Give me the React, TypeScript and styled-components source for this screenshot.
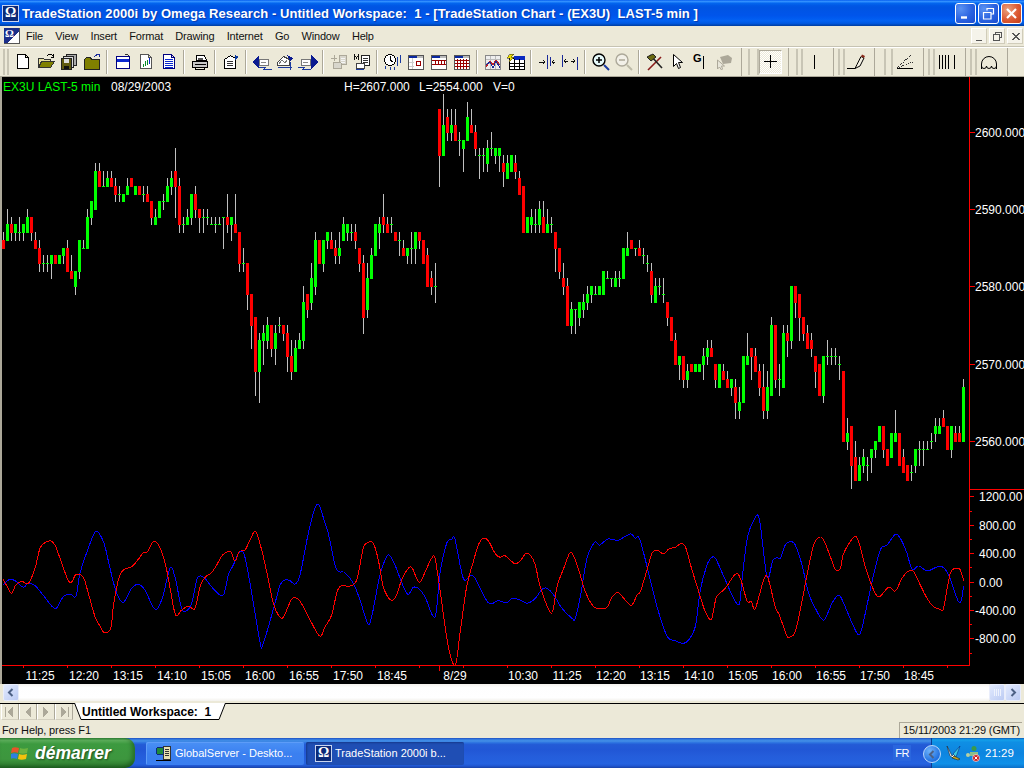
import React from "react";
import styled, { createGlobalStyle } from "styled-components";

const GlobalStyle = createGlobalStyle`
  html, body { margin: 0; padding: 0; width: 1024px; height: 768px; overflow: hidden; background: #ece9d8; }
  * { box-sizing: border-box; }
`;

const UI_FONT = `"Liberation Sans", Arial, sans-serif`;

/* ---------- chart data, read off the screen in 3x crop coordinates ---------- */

const candlesA = `r,450,477,426,477 g,402,453,357,453 r,402,429,381,453 g,402,429,402,453 d,427,427,381,453 g,402,429,402,453 g,381,429,357,429 r,381,429,381,453
r,450,477,426,477 r,474,522,450,546 d,520,520,495,546 d,520,520,495,546 g,495,522,495,567 r,495,522 g,495,522 g,474,498,474,522 r,474,546,450,546 r,543,567,495,567 g,543,591,543,615
g,450,546,450,567 d,475,475,450,477 g,381,477,357,477 g,333,384,333,405 g,243,360,219,360 r,243,291,219,291 d,289,289,243,291 g,264,291,243,291 r,264,291,243,291 r,288,315,264,336
d,313,313,288,336 g,312,336 g,288,315,264,315 r,264,291 g,288,315 r,288,315 d,313,313,288,336 r,312,336,288,336 r,333,384,333,405 g,381,405,357,405 g,333,384 d,334,334,312,360
g,288,336,264,336 g,264,291,243,315 r,243,291,174,384 r,288,405,264,429 d,403,403,381,429 g,381,405,357,405 g,312,384,312,405 r,312,360,288,384 r,357,384,357,429 d,382,382,357,429
d,382,382,357,405 d,403,403,381,405 d,403,403,381,429 d,403,403,381,405 d,382,382,381,477 r,381,405,312,429 g,381,405,381,453 r,402,429,312,429 r,426,522,426,546 d,520,520,474,546
r,519,615,519,660 r,612,708,612,777 r,681,846,681,918 g,750,846,729,939 g,729,753,705,825 g,705,753,681,777 r,705,777,705,801 g,729,777,705,825 d,706,706,681,729 r,705,732,705,753
r,729,801,705,846 r,798,846,750,870 g,774,846,750,846 g,750,777,729,777 g,636,753,588,777 r,612,660,612,684 g,564,639,519,660 g,450,591,426,615 r,450,522 g,450,522,450,546
g,426,453,426,477 r,450,477,426,477 r,474,498,450,522 g,474,498,426,522
g,402,453,381,453 g,402,429,402,453 d,427,427,402,453 r,426,453,402,477 r,474,522,474,546 r,519,684,495,732 g,564,660,519,684 g,495,567,474,567 g,402,498 g,402,429,381,477
r,381,405,312,429 r,402,429,381,429 d,403,403,381,429 r,426,453 d,451,451,426,498 r,474,498,450,498 g,474,498,474,522 d,475,475,426,522 g,426,477,426,522 r,426,453,426,477
r,450,522 r,495,591,474,591 r,564,591,543,615 d,589,589,519,639 r,57,198,57,291 g,105,198,12,198 r,81,129,57,153 g,105,129,57,153 r,105,153,57,153 d,151,151,126,198 g,150,177,150,246
g,81,153,36,153 r,105,129,57,129 r,126,177,105,198 d,196,196,174,267 d,196,196,174,246 g,174,222,150,246 d,175,175,126,198 g,174,198,174,222 g,174,198,174,246 r,219,246,195,291
g,219,267,195,267 g,195,246 r,219,246,195,267 r,264,315,243,315 r,288,429 g,381,429 g,381,405,357,429 d,403,403,357,429 g,357,405,333,429 r,381,429,333,429 g,402,429,357,429
d,403,403,381,429 r,426,477,426,546 r,474,546,474,567 r,564,591,519,615 r,588,708,564,708 g,657,708,636,732 d,658,658,658,732 g,636,684,636,708 g,636,660,612,684 g,612,639,588,660
g,588,615,588,639 d,613,613,588,615 g,588,615 g,543,615 d,565,565,543,567 d,565,565,565,591 g,565,591,543,591 d,565,565,543,591 g,474,567 g,474,498,426,498 r,450,477
d,475,475,474,498 r,474,498,450,498 d,496,496,474,522 d,520,520,495,546 r,543,615,519,639 g,588,639,564,639 d,589,589,564,615 d,613,613,564,639 r,636,684,636,708 r,681,753
r,750,825,729,825 g,798,825,798,870`;

const candlesB = `r,288,360,288,384 g,333,360,312,384 r,312,336 g,312,336 g,312,336 g,288,315,264,360 g,264,291,240,315 r,264,291,240,291 r,312,360,312,384 g,312,384 r,333,360,312,360
r,357,384,333,384 g,357,384,357,408 r,381,429,357,477 g,426,453,381,477 g,288,429 g,288,315,219,315 r,264,291,264,360 r,288,336,264,336 r,333,384,312,408 r,381,453,312,477
g,381,453,333,477 g,195,408,171,408 r,195,360,195,384 d,358,358,312,408 g,219,384,195,384 r,219,243,195,291 g,78,243,78,267 r,78,129,78,174 r,102,174,102,243 r,171,222,171,243
r,219,267,195,267 r,240,267,219,291 r,288,336,288,384 r,312,408 g,288,408,288,429 d,289,289,240,315 d,289,289,264,315 d,289,289,264,315 d,313,313,288,360 r,333,546
g,519,546,474,570 r,498,618,498,687 r,591,663,543,663 g,615,663,591,663 g,591,618,567,639 d,616,616,591,663 g,567,594,567,639 g,543,570,543,594 g,498,546 r,498,570,498,594
r,567,618 g,519,594 g,519,546,450,546 r,519,618 r,591,639,567,639 r,615,663 d,637,637,615,663 g,567,618,567,639 d,568,568,543,618 d,568,568,543,618 d,568,568,543,567 d,544,544,519,567
g,498,522,474,546 g,498,522,474,522 r,474,501,450,501 r,498,570 g,498,570,498,594 r,519,546,498,546 r,519,546,498,546 g,381,546,357,546`;

type Candle = { kind: string; top: number; bottom: number; wickTop: number; wickBottom: number };

const parseCandles = (text: string, origin: number): Candle[] =>
  text
    .trim()
    .split(/\s+/)
    .map((token) => {
      const [kind, a, b, c, d] = token.split(",");
      const py = (v: string) => Math.round(origin + Number(v) / 3);
      return {
        kind,
        top: py(a),
        bottom: py(b),
        wickTop: c ? py(c) : py(a),
        wickBottom: d ? py(d) : py(b),
      };
    });

const candles = [...parseCandles(candlesA, 90), ...parseCandles(candlesB, 260)];

const redA = "9,268 22,290 35,310 47,285 65,274 85,280 105,235 120,175 135,158 152,153 165,165 180,205 203,268 215,276 228,253 250,262 265,310 285,380 300,408 313,428 332,415 340,350 355,270 370,240 395,230 415,208 430,188 443,185 458,157 470,158 485,185 500,240 513,310 527,375 545,360 565,348 585,355 600,290 615,262 635,248 650,225 668,195 692,185 705,213 718,185 735,180 750,150 767,124 785,180 800,245 820,340 835,375 850,382 875,328 897,330 920,370 958,437 975,410 995,375 1010,310 1022,288 1050,288 1070,270 1090,175 1105,157 1120,160 1135,210 1150,290 1172,330 1188,318 1205,270 1225,235 1237,235 1258,277 1280,235 1295,205 1305,205 1320,300 1345,470 1366,524 1380,430 1400,290 1420,215 1435,165 1450,145 1465,152 1485,190 1500,202 1515,197 1536,215";
const redB = "10,222 25,212 42,190 55,195 70,225 85,290 118,370 135,290 155,235 177,187 200,240 220,305 245,350 265,355 285,352 300,322 318,307 335,325 358,346 375,315 385,305 405,240 420,190 435,180 455,192 470,177 490,172 505,162 520,170 540,240 565,320 580,365 598,388 612,325 625,308 640,295 670,253 685,265 705,332 718,335 730,355 755,270 768,265 790,350 802,375 825,438 835,440 850,425 868,345 885,255 905,165 922,142 935,150 955,200 970,238 985,235 995,190 1025,142 1040,155 1060,230 1085,300 1102,320 1130,292 1150,303 1170,265 1190,243 1205,245 1225,285 1245,325 1265,350 1285,358 1295,353 1315,250 1335,235 1345,240 1355,272";
const blueA = "9,285 30,268 50,275 70,292 85,280 105,287 125,310 155,348 170,354 190,320 210,312 228,318 240,250 265,175 288,124 312,160 330,235 350,310 370,337 395,295 415,283 435,300 465,358 487,325 500,270 513,230 527,270 545,355 560,362 575,340 590,270 600,258 615,265 645,302 670,315 685,255 700,225 718,187 733,195 750,280 780,455 790,460 825,340 840,285 855,270 870,272 885,282 900,255 925,130 945,55 958,47 975,100 985,130 1005,225 1018,245 1035,248 1060,280 1080,330 1103,400 1115,380 1140,255 1160,200 1170,197 1185,225 1220,310 1240,292 1255,295 1275,320 1305,380 1320,250 1340,160 1355,148 1365,148 1390,265 1410,257 1425,265 1465,338 1495,332 1520,338 1536,325";
const blueB = "25,330 45,340 70,325 90,298 105,295 125,315 150,355 180,385 190,385 205,320 225,205 248,157 263,165 285,148 300,148 320,150 355,132 370,145 383,147 410,250 435,350 465,438 490,452 512,460 530,450 550,410 565,300 585,225 600,202 612,208 640,270 665,325 682,342 690,270 705,150 725,92 742,88 765,260 782,212 795,203 805,205 820,165 835,155 850,165 870,225 890,310 910,355 935,390 960,340 980,315 995,340 1025,410 1043,433 1060,370 1080,275 1105,180 1125,165 1150,133 1165,145 1185,190 1200,238 1220,228 1245,243 1270,233 1290,230 1310,255 1342,338 1355,288";

// catmull-rom through the traced points, so the curves don't look like straight segments
const toCurve = (a: string, b: string) => {
  const read = (text: string, dx: number) =>
    text.split(" ").map((p) => {
      const [x, y] = p.split(",").map(Number);
      return [dx + x / 3, 490 + y / 3];
    });
  const pts = [...read(a, 0), ...read(b, 512)];
  let d = `M${pts[0][0].toFixed(1)} ${pts[0][1].toFixed(1)}`;
  for (let i = 0; i < pts.length - 1; i++) {
    const p0 = pts[Math.max(i - 1, 0)];
    const p1 = pts[i];
    const p2 = pts[i + 1];
    const p3 = pts[Math.min(i + 2, pts.length - 1)];
    const c1 = [p1[0] + (p2[0] - p0[0]) / 6, p1[1] + (p2[1] - p0[1]) / 6];
    const c2 = [p2[0] - (p3[0] - p1[0]) / 6, p2[1] - (p3[1] - p1[1]) / 6];
    d += `C${c1[0].toFixed(1)} ${c1[1].toFixed(1)} ${c2[0].toFixed(1)} ${c2[1].toFixed(1)} ${p2[0].toFixed(1)} ${p2[1].toFixed(1)}`;
  }
  return d;
};

const priceAxis = [
  { y: 132, label: "2600.000" },
  { y: 209, label: "2590.000" },
  { y: 286, label: "2580.000" },
  { y: 364, label: "2570.000" },
  { y: 441, label: "2560.000" },
];

const indicatorAxis = [
  { y: 496, label: "1200.00" },
  { y: 511 },
  { y: 525, label: "800.00" },
  { y: 539 },
  { y: 553, label: "400.00" },
  { y: 567 },
  { y: 582, label: "0.00" },
  { y: 596 },
  { y: 610, label: "-400.00", wide: true },
  { y: 624 },
  { y: 638, label: "-800.00", wide: true },
  { y: 653 },
];

const timeTicks = [23, 67, 111, 155, 199, 243, 287, 331, 375, 419, 463, 507, 551, 595, 639, 683, 727, 771, 815, 859, 903, 947];
const timeLabels: [number, string][] = [
  [40, "11:25"], [84, "12:20"], [128, "13:15"], [172, "14:10"], [216, "15:05"], [260, "16:00"], [304, "16:55"], [348, "17:50"], [392, "18:45"],
  [455, "8/29"],
  [523, "10:30"], [567, "11:25"], [611, "12:20"], [655, "13:15"], [699, "14:10"], [743, "15:05"], [787, "16:00"], [831, "16:55"], [875, "17:50"], [919, "18:45"],
];

/* ---------- window chrome ---------- */

const Page = styled.div`
  width: 1024px;
  height: 768px;
  display: flex;
  flex-direction: column;
  background: #ece9d8;
  font-family: ${UI_FONT};
  overflow: hidden;
`;

const TitleBar = styled.div`
  height: 26px;
  flex: none;
  display: flex;
  align-items: center;
  padding: 0 2px;
  background: linear-gradient(#0058ee 0%, #3593ff 5%, #1a7cf8 9%, #0365ee 13%, #0057e5 22%, #0054e3 30%, #0055eb 60%, #005bf0 70%, #0362f2 80%, #0058e0 90%, #0048b8 96%, #003da0 100%);
`;

const OmegaBadge = styled.div<{ $size: number }>`
  width: ${(p) => p.$size}px;
  height: ${(p) => p.$size}px;
  flex: none;
  display: flex;
  align-items: center;
  justify-content: center;
  background: #0b2a78;
  border: 1px solid #c8d4f0;
  color: #fff;
  font: bold ${(p) => p.$size - 3}px "Liberation Serif", serif;
  line-height: 1;
`;

const TitleText = styled.div`
  margin-left: 3px;
  color: #fff;
  font: bold 13px ${UI_FONT};
  letter-spacing: 0.075px;
  white-space: pre;
  text-shadow: 1px 1px 1px #0b3aa8;
`;

const TitleButtons = styled.div`
  margin-left: auto;
  display: flex;
  gap: 2px;
`;

const CaptionButton = styled.div<{ $danger?: boolean }>`
  width: 21px;
  height: 21px;
  display: flex;
  align-items: center;
  justify-content: center;
  border: 1px solid #fff;
  border-radius: 3px;
  background: ${(p) =>
    p.$danger
      ? "radial-gradient(circle at 30% 30%, #eaa17e, #dd5a33 55%, #c23e18)"
      : "radial-gradient(circle at 25% 25%, #5a92f2, #2a62e0 55%, #1a4cd0)"};
`;

const MenuBar = styled.div`
  height: 20px;
  flex: none;
  display: flex;
  align-items: center;
  padding-left: 4px;
  background: #ece9d8;
`;

const DocIcon = styled.div`
  width: 16px;
  height: 16px;
  flex: none;
  margin-right: 6px;
  display: flex;
  align-items: flex-start;
  justify-content: flex-start;
  padding-left: 1px;
  background: linear-gradient(to bottom right, #1c2f8a 62%, #fff 63%);
  color: #fff;
  font: bold 11px/11px "Liberation Serif", serif;
  border-right: 1px solid #555;
  border-bottom: 1px solid #555;
`;

const MenuItem = styled.span`
  font-size: 11px;
  letter-spacing: -0.18px;
  color: #111;
  margin-right: 12.3px;
`;

const MdiButtons = styled.div`
  margin-left: auto;
  margin-right: 1px;
  display: flex;
  gap: 2px;
`;

const MdiButton = styled.div`
  width: 16px;
  height: 16px;
  display: flex;
  align-items: center;
  justify-content: center;
  background: #f5f3ea;
  border-top: 1px solid #fff;
  border-left: 1px solid #fff;
  border-right: 1px solid #d0ccba;
  border-bottom: 1px solid #d0ccba;
`;

const ToolBar = styled.div`
  height: 31px;
  flex: none;
  display: flex;
  align-items: center;
  border-top: 1px solid #c6c3b3;
  border-bottom: 1px solid #aca899;
  box-shadow: inset 0 1px 0 #fff;
  background: #ece9d8;
`;

const Band = styled.div<{ $width: number; $lead: number }>`
  width: ${(p) => p.$width}px;
  height: 28px;
  flex: none;
  display: flex;
  align-items: center;
  padding-left: ${(p) => p.$lead}px;
  border-right: 1px solid #aca899;
`;

const Gripper = styled.div<{ $width: number; $trail?: number }>`
  width: ${(p) => p.$width}px;
  height: 26px;
  flex: none;
  margin-right: ${(p) => p.$trail ?? 0}px;
  border-left: 2px solid #c8c5b5;
  border-right: 2px solid #c8c5b5;
`;

const ToolButton = styled.div<{ $active?: boolean }>`
  width: 23px;
  height: 24px;
  flex: none;
  display: flex;
  align-items: center;
  justify-content: center;
  ${(p) =>
    p.$active &&
    `background: repeating-conic-gradient(#fff 0 25%, #ece9d8 0 50%) 0 0 / 2px 2px;
     border-top: 1px solid #aca899; border-left: 1px solid #aca899;
     border-right: 1px solid #fff; border-bottom: 1px solid #fff;`}
`;

const Separator = styled.div`
  width: 8px;
  height: 24px;
  flex: none;
  display: flex;
  justify-content: center;
  &::before {
    content: "";
    width: 2px;
    height: 100%;
    background: linear-gradient(90deg, #aca899 50%, #fff 50%);
  }
`;

const ChartFrame = styled.div`
  height: 607px;
  flex: none;
  border-left: 2px solid #aca899;
  background: #000;
`;

const ChartSvg = styled.svg`
  display: block;
  font-family: ${UI_FONT};
  font-size: 12px;
`;

const ScrollBar = styled.div`
  height: 19px;
  flex: none;
  display: flex;
  align-items: flex-start;
  padding: 0 3px;
  background: #ece9d8;
`;

const ScrollTrack = styled.div`
  flex: 1;
  height: 17px;
  background: linear-gradient(#f3f1ec, #fefefe 20%, #fff 80%, #f3f1ec);
`;

const ScrollButton = styled.div`
  width: 16px;
  height: 17px;
  flex: none;
  display: flex;
  align-items: center;
  justify-content: center;
  border: 1px solid #e9edfb;
  border-radius: 2px;
  background: linear-gradient(135deg, #e2eafe, #bccbf3);
`;

const TabRow = styled.div`
  height: 17px;
  flex: none;
  display: flex;
  align-items: stretch;
  padding-left: 1px;
  border-top: 1px solid #000;
  background: #ece9d8;
`;

const TabNav = styled.div`
  width: 18px;
  flex: none;
  display: flex;
  align-items: center;
  justify-content: center;
  border-left: 1px solid #fff;
  border-right: 1px solid #aca899;
  border-bottom: 1px solid #d4d0c0;
`;

const Tab = styled.div`
  position: relative;
  width: 152px;
  margin-left: 1px;
  display: flex;
  align-items: center;
  padding-left: 8px;
  font-size: 12px;
  font-weight: bold;
  white-space: pre;
  color: #000;
`;

const TabShape = styled.svg`
  position: absolute;
  left: 0;
  top: -1px;
`;

const TabLabel = styled.span`
  position: relative;
`;

const StatusBar = styled.div`
  height: 18px;
  flex: none;
  display: flex;
  align-items: center;
  justify-content: space-between;
  padding: 1px 2px 0 2px;
  font-size: 11px;
  letter-spacing: -0.12px;
  color: #111;
  background: #ece9d8;
`;

const ClockPane = styled.div`
  width: 123px;
  height: 16px;
  display: flex;
  align-items: center;
  padding-left: 3px;
  border-top: 1px solid #aca899;
  border-left: 1px solid #aca899;
  white-space: nowrap;
`;

const TaskBar = styled.div`
  height: 30px;
  flex: none;
  display: flex;
  align-items: center;
  color: #fff;
  background: linear-gradient(#1f4fc0 0, #3682e5 6%, #4490e6 10%, #2b71e0 16%, #235bd6 22%, #2157d6 40%, #245ddb 60%, #2562df 86%, #2158d4 92%, #1d4ec0 96%, #1941a5 100%);
`;

const StartButton = styled.div`
  width: 135px;
  height: 30px;
  flex: none;
  display: flex;
  align-items: center;
  padding-left: 11px;
  border-radius: 0 10px 10px 0;
  background: linear-gradient(#2f7f35 0, #59ab58 8%, #3c9a3f 20%, #3d963e 70%, #338534 88%, #25702a 100%);
  box-shadow: inset -3px -2px 4px rgba(0, 40, 0, 0.35);
`;

const StartLabel = styled.span`
  margin-left: 6px;
  font-size: 17.5px;
  font-weight: bold;
  font-style: italic;
  color: #fff;
  text-shadow: 1px 1px 2px #1c4a1c;
`;

const TaskButton = styled.div<{ $active?: boolean }>`
  width: 158px;
  height: 23px;
  flex: none;
  margin-left: ${(p) => (p.$active ? 2 : 11)}px;
  display: flex;
  align-items: center;
  padding-left: 9px;
  gap: 3px;
  border-radius: 2px;
  font-size: 11px;
  white-space: nowrap;
  background: ${(p) => (p.$active ? "#1f4eb4" : "linear-gradient(#4a90f5, #3b80f0 50%, #3a7ef0)")};
  box-shadow: ${(p) => (p.$active ? "inset 1px 1px 2px #163a8c" : "inset 1px 1px 0 #5d9cf8")};
`;

const LangBox = styled.div`
  margin-left: auto;
  margin-right: 20px;
  padding: 2px;
  font-size: 11px;
  letter-spacing: -0.5px;
  background: #2a66de;
`;

const Tray = styled.div`
  width: 93px;
  height: 30px;
  flex: none;
  position: relative;
  display: flex;
  align-items: center;
  padding-left: 14px;
  gap: 4px;
  font-size: 11.5px;
  background: linear-gradient(#0c59b9 0, #14a0ea 6%, #0f8fe4 14%, #0d85e0 50%, #0f90e8 86%, #0c6fc8 100%);
  border-left: 1px solid #0a3d90;
`;

const TrayToggle = styled.div`
  position: absolute;
  left: -9px;
  top: 7px;
  width: 18px;
  height: 18px;
  display: flex;
  align-items: center;
  justify-content: center;
  border-radius: 50%;
  border: 1px solid #bcd8fa;
  background: radial-gradient(circle at 35% 30%, #6eb2fa, #2070e0 70%);
`;

const TrayTime = styled.span`
  margin-left: 1px;
`;

const Icon = styled.svg`
  display: block;
`;

/* ---------- toolbar drawings ---------- */

const Ico: React.FC<{ children: React.ReactNode; w?: number; h?: number }> = ({ children, w = 18, h = 18 }) => (
  <Icon width={w} height={h} viewBox={`0 0 ${w} ${h}`} shapeRendering="crispEdges">
    {children}
  </Icon>
);

const PageShape = ({ fill = "#fff", line = "#000" }: { fill?: string; line?: string }) => (
  <path d="M3.5 1.5h8l3 3v11h-11z M11.5 1.5v3h3" fill={fill} stroke={line} />
);

const icons: Record<string, React.ReactNode> = {
  newFile: <Ico><PageShape /></Ico>,
  open: (
    <Ico>
      <path d="M1.5 5.5h5l1 1h6v8h-12z" fill="#e8e0a0" stroke="#333" />
      <path d="M1.5 14.5l3-6h13l-4 6z" fill="#808000" stroke="#333" />
      <path d="M10 3c2-2 4-2 6 0M16.5 1v3h-3" fill="none" stroke="#000" />
    </Ico>
  ),
  stack: (
    <Ico>
      <path d="M6.5 1.5h10v11h-10z" fill="#aaa" stroke="#222" />
      <path d="M3.5 3.5h10v11h-10z" fill="#ddd" stroke="#222" />
      <path d="M1.5 5.5h10v11h-10z" fill="#5f5a10" stroke="#222" />
      <rect x="4" y="6" width="5" height="4" fill="#ddd" />
      <rect x="4" y="13" width="5" height="3" fill="#111" />
    </Ico>
  ),
  folderUp: (
    <Ico>
      <path d="M1.5 6.5l2-2h4l1 2h8v10h-15z" fill="#808000" stroke="#222" />
      <path d="M11 4l4-3M13 1h3v3" fill="none" stroke="#1a2a9a" />
    </Ico>
  ),
  windowDoc: (
    <Ico>
      <rect x="2.5" y="3.5" width="13" height="12" fill="#fff" stroke="#000080" />
      <rect x="3" y="6" width="12" height="3" fill="#0a28d0" />
      <path d="M10.5 1.5h3l2 2" fill="none" stroke="#333" />
    </Ico>
  ),
  chartDoc: (
    <Ico>
      <PageShape line="#555" />
      <path d="M6 14v-3M8 13v-5M10 12v-5" stroke="#0a8a2a" />
      <path d="M12 11v-6" stroke="#0a28d0" />
    </Ico>
  ),
  sheet: (
    <Ico>
      <PageShape line="#000080" />
      <path d="M5 6h8M5 8h8M5 10h8M5 12h8M5 14h8" stroke="#0a28d0" />
    </Ico>
  ),
  printer: (
    <Ico>
      <path d="M5.5 2.5h8l2 5h-10z" fill="#fff" stroke="#000" />
      <path d="M1.5 8.5h15v6h-15z" fill="#c8c8c8" stroke="#000" />
      <path d="M3.5 11.5h11M4.5 14.5v2h9v-2" fill="none" stroke="#000" />
      <path d="M7 5h5M7 6.5h5" stroke="#555" />
    </Ico>
  ),
  docEdit: (
    <Ico>
      <path d="M2.5 6.5l6-4 5 3v10h-11z" fill="#fff" stroke="#000" />
      <path d="M5 8h6M5 10h6M5 12h6" stroke="#333" />
      <path d="M13 2l4 2-4 3z" fill="#0a3aa0" />
    </Ico>
  ),
  back: (
    <Ico w={22}>
      <path d="M1 9l7-7v14z" fill="#0a1a90" />
      <path d="M8.5 6.5h9v6h-9z" fill="#fff" stroke="#777" />
      <path d="M8 14.5h6l-1 2h8" fill="none" stroke="#1a3aa0" />
      <path d="M10 9h5" stroke="#888" />
    </Ico>
  ),
  reload: (
    <Ico w={22}>
      <path d="M3.5 9.5l6-6 6 3v6h-12z" fill="#fff" stroke="#444" />
      <path d="M5 11l3-4 3 3 2-3" fill="none" stroke="#777" />
      <path d="M13 2l6 3-3 3z" fill="#0a1a90" />
      <path d="M3.5 14.5h14" stroke="#1a3aa0" />
      <path d="M16.5 9v8" stroke="#1a3aa0" />
    </Ico>
  ),
  forward: (
    <Ico w={22}>
      <path d="M21 9l-7-7v14z" fill="#0a1a90" />
      <path d="M4.5 6.5h9v6h-9z" fill="#fff" stroke="#777" />
      <path d="M1 14.5h6l-1 2h8" fill="none" stroke="#1a3aa0" />
      <path d="M6 9h5" stroke="#888" />
    </Ico>
  ),
  grayPlus: (
    <Ico>
      <path d="M9.5 2.5h7v9h-7z" fill="#d8d6cc" stroke="#aca899" />
      <path d="M3.5 9.5h8v6h-8z" fill="#d8d6cc" stroke="#aca899" />
      <path d="M1 5h6M4 2v6" stroke="#aca899" />
      <path d="M11 5h4M11 7h4M11 9h4" stroke="#f5f5f5" />
    </Ico>
  ),
  multi: (
    <Ico>
      <path d="M8.5 2.5h8v10h-8z" fill="#fff" stroke="#222" />
      <path d="M3.5 10.5h8v5h-8z" fill="#fff" stroke="#444" />
      <path d="M10 5h5M10 7h5M10 9h5" stroke="#333" />
      <path d="M1.5 7V2l2 3 2-3v5" fill="none" stroke="#111" />
      <path d="M3 16.5h8" stroke="#1a3aa0" />
    </Ico>
  ),
  clock: (
    <Ico w={22}>
      <circle cx="8" cy="7" r="5.5" fill="#fff" stroke="#000" />
      <path d="M8 3v4l3 2" fill="none" stroke="#000" />
      <path d="M15.5 4v9M18.5 2v8" stroke="#1a3aa0" />
      <path d="M3 16l1-3M8 17l1-3M12 17l1-3" stroke="#1a3aa0" />
    </Ico>
  ),
  calCell: (
    <Ico>
      <rect x="1.5" y="2.5" width="15" height="14" fill="#fff" stroke="#555" />
      <rect x="2" y="3" width="8" height="2" fill="#0a28a0" />
      <rect x="10" y="3" width="6" height="2" fill="#bbb" />
      <rect x="9.5" y="8.5" width="4" height="4" fill="#fff" stroke="#900" />
      <path d="M5 5v11M2 9h5M2 13h5" stroke="#ccc" />
    </Ico>
  ),
  calRows: (
    <Ico>
      <rect x="1.5" y="2.5" width="15" height="14" fill="#fff" stroke="#555" />
      <rect x="2" y="3" width="8" height="2" fill="#0a28a0" />
      <rect x="10" y="3" width="6" height="2" fill="#bbb" />
      <path d="M2 7.5h14M2 11.5h14" stroke="#900" />
      <path d="M5.5 8v3M8.5 8v3M11.5 8v3M14.5 8v3" stroke="#900" />
    </Ico>
  ),
  calGrid: (
    <Ico>
      <rect x="1.5" y="2.5" width="15" height="14" fill="#fff" stroke="#555" />
      <rect x="2" y="3" width="8" height="2" fill="#0a28a0" />
      <rect x="10" y="3" width="6" height="2" fill="#bbb" />
      <path d="M2 7.5h14M2 10.5h14M2 13.5h14M4.5 6v10M7.5 6v10M10.5 6v10M13.5 6v10" stroke="#900" />
    </Ico>
  ),
  chartX: (
    <Ico>
      <rect x="1.5" y="2.5" width="15" height="14" fill="#eee" stroke="#888" />
      <path d="M2 6h14M2 10h14M6 3v13M11 3v13" stroke="#bbb" />
      <path d="M2 14l4-6 3 4 3-5 4 5" fill="none" stroke="#c02020" />
      <path d="M2 12l4-3 3 6 3-7 4 7" fill="none" stroke="#1a2a9a" />
    </Ico>
  ),
  boltTable: (
    <Ico w={20}>
      <rect x="3.5" y="5.5" width="15" height="11" fill="#fff" stroke="#000" />
      <rect x="8" y="3" width="11" height="4" fill="#0a28c0" />
      <path d="M4 10h14M4 13h14M8 6v10M13 6v10" stroke="#000" />
      <path d="M4 1l4 0-3 3 3 0-5 5 1-4h-3z" fill="#f0e000" stroke="#222" strokeWidth="0.5" />
    </Ico>
  ),
  spreadIn: (
    <Ico w={20}>
      <path d="M10.5 2v14M13.5 4v9" stroke="#1a2a9a" />
      <path d="M2 9h6M6 7l2 2-2 2M18 9h-3M17 7l-2 2 2 2" fill="none" stroke="#111" />
    </Ico>
  ),
  spreadOut: (
    <Ico w={20}>
      <path d="M2.5 2v12M17.5 4v13" stroke="#1a2a9a" />
      <path d="M4 8h4M6 6l-2 2 2 2M15 8h-4M13 6l2 2-2 2" fill="none" stroke="#111" />
    </Ico>
  ),
  zoomIn: (
    <Icon width={20} height={20} viewBox="0 0 20 20">
      <circle cx="8" cy="8" r="6" fill="#e6fafa" stroke="#000" strokeWidth="1.4" />
      <path d="M5 8h6M8 5v6" stroke="#000" strokeWidth="1.5" />
      <path d="M13 13l5 5" stroke="#1a3aa0" strokeWidth="2" />
    </Icon>
  ),
  zoomOut: (
    <Icon width={20} height={20} viewBox="0 0 20 20">
      <circle cx="8" cy="8" r="6" fill="#f2f0e8" stroke="#aca899" strokeWidth="1.4" />
      <path d="M5 8h6" stroke="#aca899" strokeWidth="1.5" />
      <path d="M13 13l5 5" stroke="#bdbaa8" strokeWidth="2" />
    </Icon>
  ),
  hammer: (
    <Icon width={20} height={20} viewBox="0 0 20 20">
      <path d="M3 18L16 5" stroke="#8a1a1a" strokeWidth="1.6" />
      <path d="M5 3l12 13" stroke="#222" strokeWidth="1.6" />
      <path d="M2 5l6-3 3 3-5 4z" fill="#6a6a10" stroke="#222" />
    </Icon>
  ),
  arrow: (
    <Icon width={16} height={18} viewBox="0 0 16 18">
      <path d="M3.5 1.5v12l3-3 2 5 2-1-2-5h4z" fill="#fff" stroke="#000" />
    </Icon>
  ),
  gLine: (
    <Icon width={18} height={18} viewBox="0 0 18 18" shapeRendering="crispEdges">
      <text x="1" y="9" fontFamily={UI_FONT} fontWeight="bold" fontSize="11">G</text>
      <path d="M11.5 3v13" stroke="#000" />
    </Icon>
  ),
  grayHat: (
    <Icon width={20} height={20} viewBox="0 0 20 20">
      <path d="M6 5l8-2 4 3-1 5-8 1z" fill="#aca899" />
      <path d="M3.5 8v9l2-2 2 3 1-1-1-3h3z" fill="#e8e6da" stroke="#aca899" />
    </Icon>
  ),
  cross: (
    <Ico w={15} h={15}>
      <path d="M7.5 1v13M1 7.5h13" stroke="#000" />
    </Ico>
  ),
  vline: (
    <Ico w={3} h={16}>
      <path d="M1.5 1v14" stroke="#000" />
    </Ico>
  ),
  pencil: (
    <Icon width={20} height={18} viewBox="0 0 20 18">
      <path d="M0 15.5h8" stroke="#000" />
      <path d="M8 15.5l2-4 4-8 3 1.5-4 8z" fill="#f2efe2" stroke="#000" />
      <path d="M14 3.5l3 1.5 1-2-3-1.5z" fill="#8a2a1a" />
    </Icon>
  ),
  fan: (
    <Icon width={18} height={18} viewBox="0 0 18 18" shapeRendering="crispEdges">
      <path d="M1 15.5h16M1 15l14-13M1 15l16-6" stroke="#333" strokeDasharray="1 1" fill="none" />
      <path d="M1 15.5h16" stroke="#000" />
    </Icon>
  ),
  bars: (
    <Ico w={18} h={16}>
      <path d="M1.5 1v14M4.5 1v14M7.5 1v14M10.5 1v14M16.5 1v14" stroke="#000" />
    </Ico>
  ),
  arcs: (
    <Icon width={18} height={18} viewBox="0 0 18 18">
      <path d="M1.5 11a7.5 7.5 0 0 1 15 0M1.5 11v5M16.5 11v5" fill="none" stroke="#000" />
      <path d="M1.5 13a2.5 2.5 0 0 0 5 0a2.5 2.5 0 0 0 5 0a2.5 2.5 0 0 0 5 0" fill="none" stroke="#000" />
    </Icon>
  ),
};

type ToolItem = string | null;

const mainTools: ToolItem[] = [
  "newFile", "open", "stack", "folderUp", null,
  "windowDoc", "chartDoc", "sheet", null,
  "printer", null,
  "docEdit", null,
  "back", "reload", "forward", null,
  "grayPlus", "multi", null,
  "clock", "calCell", "calRows", "calGrid", null,
  "chartX", "boltTable", null,
  "spreadIn", "spreadOut", null,
  "zoomIn", "zoomOut", null,
  "hammer", "arrow", "gLine", "grayHat",
];

const sideBands = [
  { width: 47, lead: 6, grip: 11, icon: "cross", active: true },
  { width: 45, lead: 7, grip: 7, icon: "vline" },
  { width: 41, lead: 4, grip: 7, icon: "pencil" },
  { width: 49, lead: 9, grip: 9, icon: "fan" },
  { width: 42, lead: 4, grip: 7, icon: "bars" },
  { width: 42, lead: 4, grip: 7, icon: "arcs" },
];

const Chevron = ({ dir }: { dir: "left" | "right" }) => (
  <Icon width={8} height={9} viewBox="0 0 8 9">
    <path
      d={dir === "left" ? "M5.5 1L2 4.5 5.5 8" : "M2.5 1L6 4.5 2.5 8"}
      fill="none"
      stroke="#4d6185"
      strokeWidth="2"
    />
  </Icon>
);

const NavGlyph = ({ dir, stop }: { dir: "left" | "right"; stop?: boolean }) => (
  <Icon width={12} height={12} viewBox="0 0 12 12" shapeRendering="crispEdges">
    <path d={dir === "left" ? "M9 1L3 6l6 5z" : "M3 1l6 5-6 5z"} fill="#aca899" />
    {stop && <path d={dir === "left" ? "M1.5 1v10" : "M10.5 1v10"} stroke="#aca899" />}
  </Icon>
);

const Chart = () => (
  <ChartSvg width={1022} height={607} viewBox="2 77 1022 607">
    <g shapeRendering="crispEdges">
      {candles.map((c, i) => {
        const x = 2 + 4 * i;
        const colour = c.kind === "r" ? "#ff0000" : "#00ff00";
        return (
          <g key={i}>
            <rect x={x + 1} y={c.wickTop} width={1} height={Math.max(c.wickBottom - c.wickTop, 1)} fill="#c0c0c0" />
            <rect x={x} y={c.top} width={3} height={c.kind === "d" ? 1 : c.bottom - c.top} fill={colour} />
          </g>
        );
      })}
      <path d={toCurve(blueA, blueB)} fill="none" stroke="#0000ff" />
      <path d={toCurve(redA, redB)} fill="none" stroke="#ff0000" />

      <path d="M969.5 77v589M969 489.5h55M2 665.5h968" stroke="#ff0000" fill="none" />
      {timeTicks.map((x) => (
        <path key={x} d={`M${x + 0.5} 666v2`} stroke="#ff0000" />
      ))}
      <path d="M439.5 666v5" stroke="#ff0000" />
      {priceAxis.map((t) => (
        <path key={t.y} d={`M970 ${t.y + 0.5}h5`} stroke="#ff0000" />
      ))}
      {indicatorAxis.map((t) => (
        <path key={t.y} d={`M970 ${t.y + 0.5}h${t.label ? 4 : 2}`} stroke="#ff0000" />
      ))}
    </g>

    <text x={3} y={91} fill="#00ff00">EX3U LAST-5 min</text>
    <text x={111} y={91} fill="#fff">08/29/2003</text>
    <text x={344} y={91} fill="#fff">H=2607.000</text>
    <text x={419} y={91} fill="#fff">L=2554.000</text>
    <text x={493} y={91} fill="#fff">V=0</text>

    {priceAxis.map((t) => (
      <text key={t.y} x={975} y={t.y + 5} fill="#fff">{t.label}</text>
    ))}
    {indicatorAxis.map((t) =>
      t.label ? (
        <text key={t.y} x={t.wide ? 975 : 979} y={t.y + 5} fill="#fff">{t.label}</text>
      ) : null
    )}
    {timeLabels.map(([x, label]) => (
      <text key={x} x={x} y={680} fill="#fff" textAnchor="middle">{label}</text>
    ))}
  </ChartSvg>
);

const CaptionGlyph = ({ d, width = 1.6 }: { d: string; width?: number }) => (
  <Icon width={13} height={13} viewBox="0 0 13 13">
    <path d={d} fill="none" stroke="#fff" strokeWidth={width} />
  </Icon>
);

const MdiGlyph = ({ d }: { d: string }) => (
  <Icon width={11} height={11} viewBox="0 0 11 11" shapeRendering="crispEdges">
    <path d={d} fill="none" stroke="#555" strokeWidth="1" />
  </Icon>
);

const WindowsFlag = () => (
  <Icon width={18} height={18} viewBox="0 0 18 18">
    <path d="M1 4c2-1 4-1 7 0l-1 5c-2-1-4-1-7 0z" fill="#e8542a" />
    <path d="M9 4c2 1 5 1 8 0l-1 5c-3 1-6 1-8 0z" fill="#6cb33f" />
    <path d="M0 10c2-1 4-1 7 0l-1 5c-2-1-4-1-7 0z" fill="#2f7fe0" />
    <path d="M8 10c2 1 5 1 8 0l-1 5c-3 1-6 1-8 0z" fill="#f4c20d" />
  </Icon>
);

const ServerIcon = () => (
  <Icon width={17} height={17} viewBox="0 0 17 17" shapeRendering="crispEdges">
    <path d="M8.5 1.5h7v13h-7z" fill="#e8e0b0" stroke="#333" />
    <path d="M10 4h4M10 6h4M10 8h4M10 10h4" stroke="#333" />
    <circle cx="5" cy="6" r="4" fill="#1f8a3a" stroke="#0a2a80" />
    <path d="M1 15.5h15" stroke="#000" />
  </Icon>
);

const DaemonIcon = () => (
  <Icon width={15} height={17} viewBox="0 0 15 17">
    <path d="M1 1l5 10 2-2 1 5-5-3z" fill="#fff" stroke="#222" strokeWidth="0.6" />
    <path d="M14 1l-4 11-3-3z" fill="#3ac8e0" stroke="#0a2a80" strokeWidth="0.6" />
    <path d="M6 13l6 2 2-1-6-3z" fill="#c8a820" stroke="#222" strokeWidth="0.6" />
  </Icon>
);

const NetworkIcon = () => (
  <Icon width={15} height={17} viewBox="0 0 15 17">
    <circle cx="9" cy="3.5" r="2.5" fill="#3a9a4a" />
    <path d="M5 7h8v4H5z" fill="#8ac08a" />
    <circle cx="3" cy="10" r="2" fill="#b8d0a0" />
    <circle cx="11" cy="13" r="3.5" fill="#d02020" stroke="#fff" strokeWidth="0.6" />
    <path d="M9.5 11.5l3 3M12.5 11.5l-3 3" stroke="#fff" />
  </Icon>
);

export default function App() {
  return (
    <Page>
      <GlobalStyle />
      <TitleBar>
        <OmegaBadge $size={17}>Ω</OmegaBadge>
        <TitleText>TradeStation 2000i by Omega Research - Untitled Workspace:  1 - [TradeStation Chart - (EX3U)  LAST-5 min ]</TitleText>
        <TitleButtons>
          <CaptionButton>
            <CaptionGlyph d="M2 10.5h6" width={2.4} />
          </CaptionButton>
          <CaptionButton>
            <CaptionGlyph d="M5 3.5V1.5h6.5V7H9M1.5 5.5H9v6.5H1.5z" width={1.2} />
          </CaptionButton>
          <CaptionButton $danger>
            <CaptionGlyph d="M2 2l9 9M11 2l-9 9" width={2.2} />
          </CaptionButton>
        </TitleButtons>
      </TitleBar>

      <MenuBar>
        <DocIcon>Ω</DocIcon>
        {["File", "View", "Insert", "Format", "Drawing", "Internet", "Go", "Window", "Help"].map((m) => (
          <MenuItem key={m}>{m}</MenuItem>
        ))}
        <MdiButtons>
          <MdiButton>
            <MdiGlyph d="M2 9h6" />
          </MdiButton>
          <MdiButton>
            <MdiGlyph d="M3.5 3.5v-2h6v5h-2M1.5 3.5h6v6h-6z" />
          </MdiButton>
          <MdiButton>
            <MdiGlyph d="M2 2l7 7M3 2l7 7M9 2L2 9M10 2L3 9" />
          </MdiButton>
        </MdiButtons>
      </MenuBar>

      <ToolBar>
        <Band $width={742} $lead={3}>
          <Gripper $width={6} $trail={2} />
          {mainTools.map((tool, i) =>
            tool ? <ToolButton key={i}>{icons[tool]}</ToolButton> : <Separator key={i} />
          )}
        </Band>
        {sideBands.map((band) => (
          <Band key={band.icon} $width={band.width} $lead={band.lead}>
            <Gripper $width={band.grip} />
            <ToolButton $active={band.active}>{icons[band.icon]}</ToolButton>
          </Band>
        ))}
      </ToolBar>

      <ChartFrame>
        <Chart />
      </ChartFrame>

      <ScrollBar>
        <ScrollButton>
          <Chevron dir="left" />
        </ScrollButton>
        <ScrollTrack />
        <ScrollButton>
          <Icon width={8} height={9} viewBox="0 0 8 9" shapeRendering="crispEdges">
            <path d="M1.5 1v7M3.5 1v7M5.5 1v7M7.5 1v7" stroke="#eef2fd" />
          </Icon>
        </ScrollButton>
        <ScrollButton>
          <Chevron dir="right" />
        </ScrollButton>
      </ScrollBar>

      <TabRow>
        <TabNav>
          <NavGlyph dir="left" stop />
        </TabNav>
        <TabNav>
          <NavGlyph dir="left" />
        </TabNav>
        <TabNav>
          <NavGlyph dir="right" />
        </TabNav>
        <TabNav>
          <NavGlyph dir="right" stop />
        </TabNav>
        <Tab>
          <TabShape width={152} height={17} viewBox="0 0 152 17">
            <path d="M0.5 0L7 16.5H145L151.5 0" fill="#fff" stroke="#000" />
          </TabShape>
          <TabLabel>Untitled Workspace:  1</TabLabel>
        </Tab>
      </TabRow>

      <StatusBar>
        <span>For Help, press F1</span>
        <ClockPane>15/11/2003 21:29 (GMT)</ClockPane>
      </StatusBar>

      <TaskBar>
        <StartButton>
          <WindowsFlag />
          <StartLabel>démarrer</StartLabel>
        </StartButton>
        <TaskButton>
          <ServerIcon />
          GlobalServer - Deskto...
        </TaskButton>
        <TaskButton $active>
          <OmegaBadge $size={17}>Ω</OmegaBadge>
          TradeStation 2000i b...
        </TaskButton>
        <LangBox>FR</LangBox>
        <Tray>
          <TrayToggle>
            <Chevron dir="left" />
          </TrayToggle>
          <DaemonIcon />
          <NetworkIcon />
          <TrayTime>21:29</TrayTime>
        </Tray>
      </TaskBar>
    </Page>
  );
}
